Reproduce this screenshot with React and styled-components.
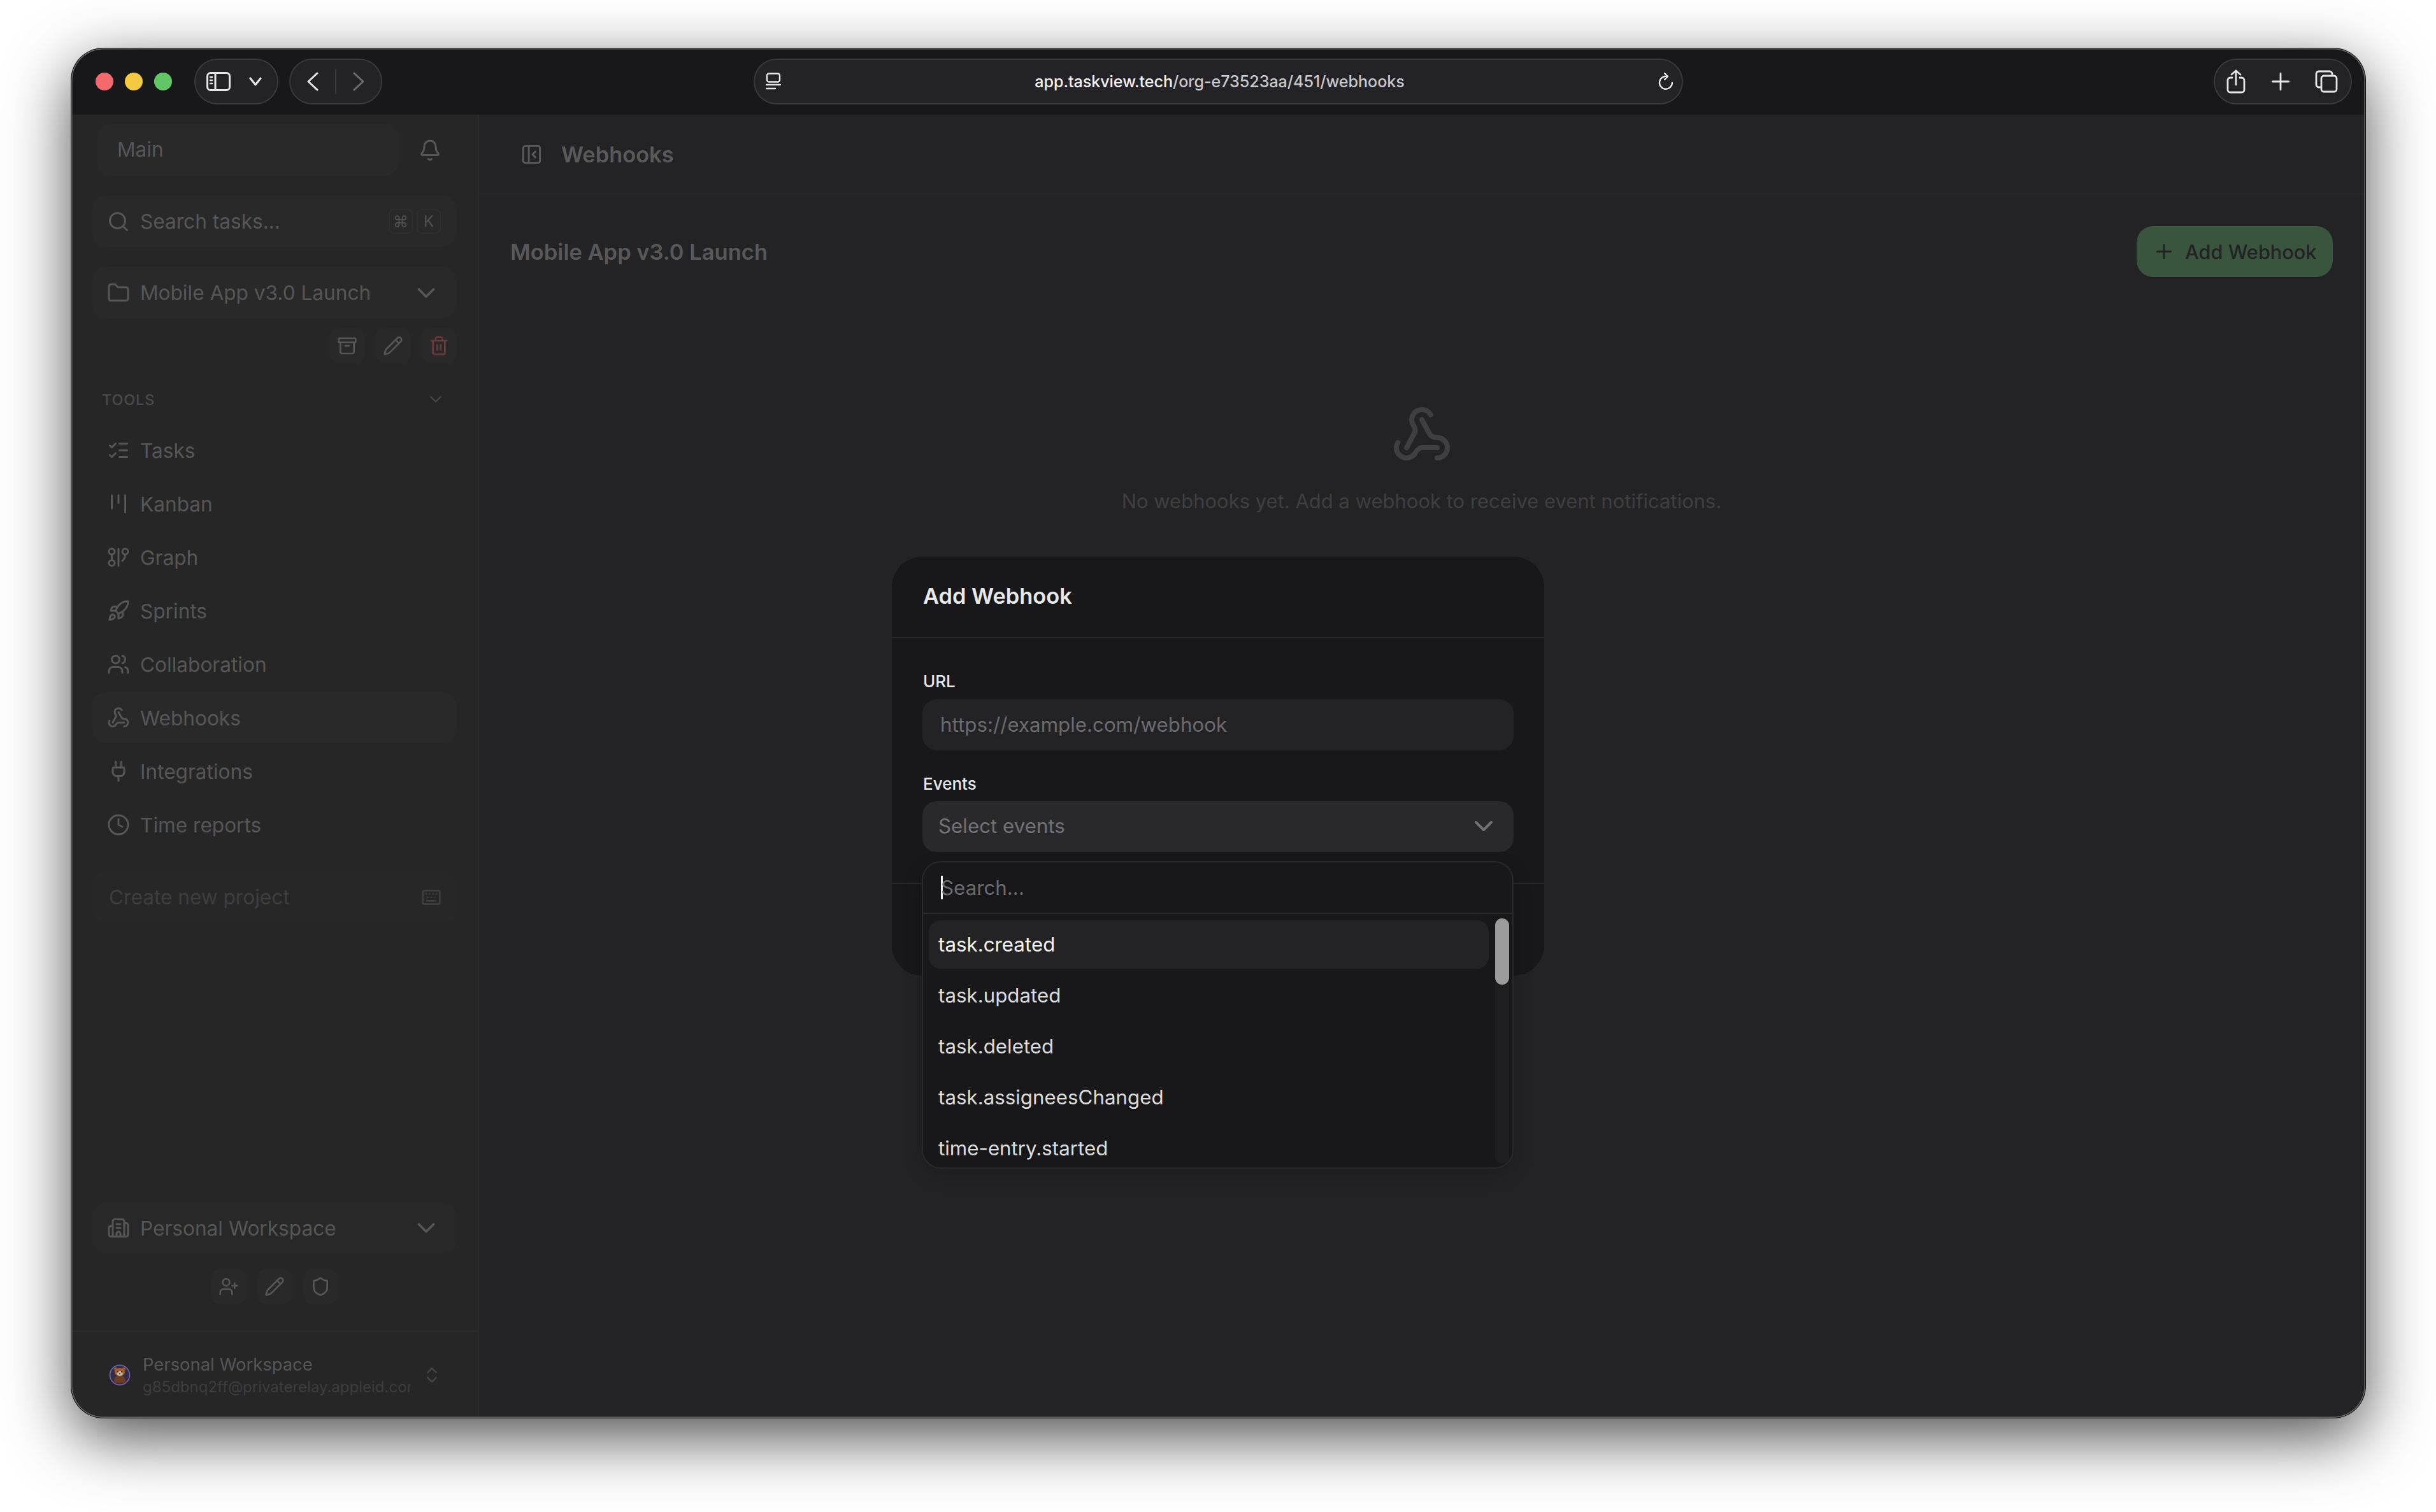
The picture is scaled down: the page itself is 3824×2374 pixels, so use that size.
import React from "react";
import styled, { createGlobalStyle } from "styled-components";
import {
  Archive, Bell, Building2, ChevronDown, ChevronsUpDown, Clock, Folder, GitGraph, Kanban,
  Keyboard, ListChecks, PanelLeftClose, Pencil, Plug, Plus, Rocket, Search, Shield, Trash2,
  UserPlus, Users, Webhook,
} from "lucide-react";

const UI = '"Inter", "Open Sans", "Liberation Sans", sans-serif';

const Global = createGlobalStyle`
  html, body { margin: 0; padding: 0; background: #fff; }
  body { font-family: ${UI}; width: 3824px; height: 2374px; overflow: hidden; }
  * { box-sizing: border-box; }
`;

const Page = styled.div`
  width: 3824px;
  height: 2374px;
  padding: 76px 111px 148px 112px;
`;

const Window = styled.div`
  position: relative;
  width: 100%;
  height: 100%;
  display: flex;
  flex-direction: column;
  border-radius: 50px;
  background: #232325;
  box-shadow: 0 0 0 1px #0c0c0c, 0 30px 100px rgba(0, 0, 0, 0.7);
  overflow: hidden;
  &::after {
    content: "";
    position: absolute;
    inset: 0;
    border-radius: 50px;
    box-shadow: inset 0 0 0 1.5px #6c6c6e;
    pointer-events: none;
  }
`;

const Frame = styled.div`
  position: relative;
  width: 100%;
  height: 100%;
  border-radius: 50px;
`;

const TitleBar = styled.header`
  flex: 0 0 104px;
  display: grid;
  grid-template-columns: 1fr 1459px 1fr;
  align-items: center;
  background: #18181a;
`;

const TitleLeft = styled.div`
  display: flex;
  align-items: center;
  padding-left: 38px;
`;

const Lights = styled.div`
  display: flex;
  gap: 18px;
  margin-right: 35px;
`;

const Light = styled.span`
  width: 28px;
  height: 28px;
  border-radius: 50%;
  background: ${(p) => p.$c};
`;

const Pill = styled.div`
  height: 72px;
  display: flex;
  align-items: center;
  background: #232327;
  border: 2px solid #38383d;
  border-radius: 36px;
  color: #e6e6e6;
`;

const SidebarToggle = styled(Pill)`
  width: 132px;
  padding-left: 17px;
  gap: 29px;
  margin-right: 17px;
`;

const NavPill = styled(Pill)`
  width: 146px;
  justify-content: space-between;
  padding: 0 26px 0 26px;
`;

const PillDivider = styled.span`
  width: 2px;
  height: 40px;
  background: #38383d;
`;

const AddressBar = styled(Pill)`
  width: 1459px;
  padding: 0 13px 0 17px;
  justify-content: space-between;
`;

const Url = styled.span`
  font-family: "Inter", "Liberation Sans", sans-serif;
  font-size: 25.2px;
  font-weight: 500;
  color: #c9c9cb;
  letter-spacing: -0.1px;
  b { color: #f2f2f2; font-weight: 500; }
`;

const ToolPill = styled(Pill)`
  justify-self: end;
  width: 217px;
  margin-right: 21px;
  padding: 0 20px 0 18px;
  justify-content: space-between;
`;

const Body = styled.div`
  flex: 1;
  min-height: 0;
  display: flex;
  position: relative;
`;

const Sidebar = styled.aside`
  flex: 0 0 640px;
  width: 640px;
  min-width: 0;
  overflow: hidden;
  display: flex;
  flex-direction: column;
  background: #262627;
  border-right: 2px solid #2a2a2c;
  padding-top: 15px;
  color: #565657;
  font-size: 31.6px;
`;

const TopRow = styled.div`
  display: flex;
  align-items: center;
  height: 81px;
  padding: 0 57px 0 40px;
  justify-content: space-between;
`;

const MainBox = styled.div`
  width: 474px;
  height: 81px;
  display: flex;
  align-items: center;
  padding-left: 32px;
  padding-bottom: 2px;
  border-radius: 22px;
  background: #29292a;
`;

const Wide = styled.div`
  height: ${(p) => p.$h || 81}px;
  margin: ${(p) => p.$mt || 0}px 33px 0 32px;
  display: flex;
  align-items: center;
  gap: 16px;
  padding: 0 25px 0 24px;
  border-radius: 22px;
  background: ${(p) => (p.$flat ? "#282829" : "#29292a")};
`;

const WideLabel = styled.span`
  flex: 1;
  white-space: nowrap;
`;

const Kbd = styled.kbd`
  width: 38px;
  height: 39px;
  display: flex;
  align-items: center;
  justify-content: center;
  font-family: ${UI};
  font-size: 24px;
  color: #505051;
  border: 2px solid #2f2f30;
  border-radius: 8px;
`;

const Kbds = styled.div`
  display: flex;
  gap: 6px;
`;

const Actions = styled.div`
  margin: ${(p) => p.$mt}px 33px 0 32px;
  display: flex;
  gap: 16px;
  justify-content: ${(p) => (p.$center ? "center" : "flex-end")};
`;

const ActionBtn = styled.button`
  width: 56px;
  height: 56px;
  padding: 0;
  display: flex;
  align-items: center;
  justify-content: center;
  border: 0;
  border-radius: 16px;
  background: #29292a;
  color: ${(p) => p.$c || "#565657"};
`;

const SectionHead = styled.div`
  height: 30px;
  margin: 41px 33px 0 32px;
  padding: 0 18px 0 16px;
  display: flex;
  align-items: center;
  justify-content: space-between;
  font-size: 23.5px;
  font-weight: 500;
  letter-spacing: 0.8px;
  color: #4a4a4b;
`;

const Nav = styled.nav`
  margin: 25px 33px 0 32px;
  display: flex;
  flex-direction: column;
  gap: 4px;
`;

const NavItem = styled.a`
  height: 80px;
  display: flex;
  align-items: center;
  gap: 16px;
  padding-left: 24px;
  border-radius: 22px;
  background: ${(p) => (p.$active ? "#29292a" : "transparent")};
`;

const CreateRow = styled(Wide)`
  margin-top: 33px;
  color: #3e3e3f;
  background: #272728;
  padding: 0 24px 0 27px;
`;

const Spacer = styled.div`
  flex: 1;
`;

const UserRow = styled.div`
  height: 137px;
  margin-top: 41px;
  border-top: 2px solid #2a2a2b;
  display: flex;
  align-items: center;
  padding: 0 56px 0 57px;
  gap: 17px;
`;

const UserText = styled.div`
  flex: 1;
  min-width: 0;
  display: flex;
  flex-direction: column;
  gap: 4px;
  overflow: hidden;
`;

const UserName = styled.span`
  font-size: 27.4px;
  line-height: 34px;
  white-space: nowrap;
`;

const UserMail = styled.span`
  font-size: 24px;
  line-height: 30px;
  color: #3d3d3e;
  white-space: nowrap;
  overflow: hidden;
`;

const Main = styled.main`
  flex: 1;
  min-width: 0;
  display: flex;
  flex-direction: column;
  background: #232325;
`;

const MainHeader = styled.div`
  flex: 0 0 126px;
  display: flex;
  align-items: center;
  gap: 29px;
  padding-left: 65px;
  border-bottom: 2px solid #29292b;
  font-size: 34.4px;
  font-weight: 600;
  color: #5a5a5b;
`;

const Content = styled.div`
  flex: 1;
  padding: 49px 51px 0 49px;
  display: flex;
  flex-direction: column;
`;

const TitleRow = styled.div`
  display: flex;
  align-items: center;
  justify-content: space-between;
`;

const ProjectTitle = styled.h1`
  margin: 0;
  font-size: 34.5px;
  font-weight: 600;
  color: #58585a;
`;

const AddButton = styled.button`
  width: 308px;
  height: 80px;
  display: flex;
  align-items: center;
  gap: 15px;
  padding: 0 0 0 25px;
  border: 0;
  border-radius: 26px;
  background: #39553e;
  color: #222224;
  font-family: ${UI};
  font-size: 30.7px;
  font-weight: 500;
`;

const Empty = styled.div`
  margin-top: 200px;
  display: flex;
  flex-direction: column;
  align-items: center;
  gap: 36px;
  color: #3f3f41;
  font-size: 31px;
  line-height: 40px;
`;

const Overlay = styled.div`
  position: absolute;
  inset: 0;
  display: flex;
  justify-content: center;
  align-items: flex-start;
  padding: 694px 1px 0 0;
`;

const Modal = styled.section`
  width: 1024px;
  height: 658px;
  display: flex;
  flex-direction: column;
  background: #18181a;
  border-radius: 48px;
  color: #e8e8e9;
`;

const ModalHeader = styled.div`
  height: 128px;
  display: flex;
  align-items: center;
  padding: 0 49px 4px;
  border-bottom: 2px solid #29292b;
  font-size: 34.4px;
  font-weight: 600;
`;

const ModalBody = styled.div`
  padding: 53px 48px 48px;
  display: flex;
  flex-direction: column;
  border-bottom: 2px solid #29292b;
`;

const Label = styled.label`
  height: 30px;
  margin: ${(p) => p.$mt || 0}px 0 ${(p) => p.$mb || 13}px 1px;
  font-size: 26px;
  font-weight: 500;
  line-height: 30px;
`;

const UrlInput = styled.input`
  height: 80px;
  width: 100%;
  padding: 0 28px;
  border: 0;
  border-radius: 22px;
  background: #232325;
  color: #e8e8e9;
  font-family: ${UI};
  font-size: 31.3px;
  &::placeholder { color: #6a6a70; opacity: 1; }
`;

const SelectBtnWrap = styled.div`
  position: relative;
`;

const SelectBtn = styled.div`
  height: 80px;
  display: flex;
  align-items: center;
  justify-content: space-between;
  padding: 0 23px 2px 25px;
  border-radius: 22px;
  background: #29292b;
  color: #727277;
  font-size: 31.3px;
`;

const Popover = styled.div`
  position: absolute;
  top: 94px;
  left: -1px;
  width: 929px;
  height: 483px;
  overflow: hidden;
  background: #18181a;
  border: 2px solid #29292b;
  border-radius: 30px;
  box-shadow: 0 10px 30px rgba(0, 0, 0, 0.18);
`;

const PopSearch = styled.div`
  height: 81px;
  display: flex;
  align-items: center;
  padding-left: 28px;
  border-bottom: 2px solid #29292b;
  color: #6a6a70;
  font-size: 31.3px;
`;

const Caret = styled.span`
  width: 3px;
  height: 37px;
  margin-right: -3px;
  background: #f2f2f2;
`;

const OptionList = styled.ul`
  list-style: none;
  margin: 0;
  padding: 10px 37px 0 9px;
  display: flex;
  flex-direction: column;
  gap: 4px;
`;

const Option = styled.li`
  flex: 0 0 76px;
  display: flex;
  align-items: center;
  padding: 0 0 1px 15px;
  border-radius: 18px;
  font-size: 31.3px;
  color: ${(p) => (p.$on ? "#f4f4f4" : "#dcdcdd")};
  background: ${(p) => (p.$on ? "#232325" : "transparent")};
`;

const ScrollTrack = styled.div`
  position: absolute;
  top: 88px;
  right: 5px;
  bottom: 6px;
  width: 22px;
  border-radius: 11px;
  background: #1e1e20;
`;

const ScrollThumb = styled.div`
  height: 104px;
  border-radius: 11px;
  background: #9c9c9d;
`;

/* ---------- Safari chrome drawings ---------- */
const Stroke = styled.svg`
  display: block;
  flex: none;
  fill: none;
  stroke: ${(p) => p.$c || "currentColor"};
  stroke-linecap: round;
  stroke-linejoin: round;
`;

const SidebarGlyph = () => (
  <Stroke width="38" height="30" viewBox="0 0 38 30" strokeWidth="3">
    <rect x="1.5" y="1.5" width="35" height="27" rx="5" />
    <path d="M14 2v26" />
    <path d="M6 8h3M6 13h3M6 18h3" strokeWidth="2.5" />
  </Stroke>
);
const SmallChevron = () => (
  <Stroke width="20" height="14" viewBox="0 0 20 14" strokeWidth="3.2">
    <path d="M2 2l8 10 8-10" />
  </Stroke>
);
const Back = () => (
  <Stroke width="18" height="30" viewBox="0 0 18 30" strokeWidth="3">
    <path d="M16 2L2 15l14 13" />
  </Stroke>
);
const Fwd = () => (
  <Stroke width="18" height="30" viewBox="0 0 18 30" strokeWidth="3" $c="#6c6c70">
    <path d="M2 2l14 13L2 28" />
  </Stroke>
);
const SiteGlyph = () => (
  <Stroke width="24" height="28" viewBox="0 0 24 28" strokeWidth="2.4">
    <rect x="2" y="1.5" width="20" height="13" rx="3" />
    <path d="M1 19h22" />
    <path d="M1 25h14" />
  </Stroke>
);
const Reload = () => (
  <Stroke width="24" height="28" viewBox="0 0 24 28" strokeWidth="2.4">
    <path d="M14 6a10 10 0 1 0 8 10" />
    <path d="M10 1l5 5-5 5" />
  </Stroke>
);
const Share = () => (
  <Stroke width="30" height="38" viewBox="0 0 30 38" strokeWidth="2.8">
    <path d="M9 13H6a4 4 0 0 0-4 4v15a4 4 0 0 0 4 4h18a4 4 0 0 0 4-4V17a4 4 0 0 0-4-4h-3" />
    <path d="M15 24V2M8 8l7-6 7 6" />
  </Stroke>
);
const NewTab = () => (
  <Stroke width="28" height="28" viewBox="0 0 28 28" strokeWidth="2.8">
    <path d="M14 1v26M1 14h26" />
  </Stroke>
);
const Tabs = () => (
  <Stroke width="36" height="36" viewBox="0 0 36 36" strokeWidth="2.8">
    <path d="M8 27H6a4 4 0 0 1-4-4V6a4 4 0 0 1 4-4h17a4 4 0 0 1 4 4v2" />
    <rect x="10" y="9" width="24" height="25" rx="4" />
  </Stroke>
);

const Avatar = () => (
  <svg width="38" height="38" viewBox="0 0 38 38" style={{ flex: "none" }}>
    <defs>
      <linearGradient id="ring" x1="0" y1="0" x2="1" y2="1">
        <stop offset="0" stopColor="#4f6a99" />
        <stop offset="1" stopColor="#8a5494" />
      </linearGradient>
    </defs>
    <circle cx="19" cy="19" r="18.5" fill="#26222f" />
    <circle cx="19" cy="19" r="15.5" fill="#332e48" stroke="url(#ring)" strokeWidth="1.8" />
    <path d="M10 29c0-6 4-9 9-9s9 3 9 9c-3 3-15 3-18 0z" fill="#6e3c20" />
    <circle cx="12.5" cy="9.5" r="2.6" fill="#9a5529" />
    <circle cx="25.5" cy="9.5" r="2.6" fill="#9a5529" />
    <ellipse cx="19" cy="14.5" rx="8" ry="6.5" fill="#a55d2c" />
    <ellipse cx="19" cy="16.5" rx="4.6" ry="3.6" fill="#c8bfb4" />
    <circle cx="16" cy="14" r="1" fill="#221612" />
    <circle cx="22" cy="14" r="1" fill="#221612" />
    <circle cx="19" cy="17" r="0.9" fill="#221612" />
  </svg>
);

const navItems = [
  [ListChecks, "Tasks"], [Kanban, "Kanban"], [GitGraph, "Graph"], [Rocket, "Sprints"],
  [Users, "Collaboration"], [Webhook, "Webhooks", true], [Plug, "Integrations"], [Clock, "Time reports"],
];
const events = ["task.created", "task.updated", "task.deleted", "task.assigneesChanged", "time-entry.started"];

export default function App() {
  return (
    <>
      <Global />
      <Page>
        <Frame>
          <Window>
            <TitleBar>
              <TitleLeft>
                <Lights>
                  <Light $c="#f4696b" />
                  <Light $c="#f5c941" />
                  <Light $c="#62c566" />
                </Lights>
                <SidebarToggle>
                  <SidebarGlyph />
                  <SmallChevron />
                </SidebarToggle>
                <NavPill>
                  <Back />
                  <PillDivider />
                  <Fwd />
                </NavPill>
              </TitleLeft>
              <AddressBar>
                <SiteGlyph />
                <Url><b>app.taskview.tech</b>/org-e73523aa/451/webhooks</Url>
                <Reload />
              </AddressBar>
              <ToolPill>
                <Share />
                <NewTab />
                <Tabs />
              </ToolPill>
            </TitleBar>
            <Body>
              <Sidebar>
                <TopRow>
                  <MainBox>Main</MainBox>
                  <Bell size={36} />
                </TopRow>
                <Wide $mt={31}>
                  <Search size={36} />
                  <WideLabel>Search tasks...</WideLabel>
                  <Kbds>
                    <Kbd>⌘</Kbd>
                    <Kbd>K</Kbd>
                  </Kbds>
                </Wide>
                <Wide $mt={31}>
                  <Folder size={36} />
                  <WideLabel>Mobile App v3.0 Launch</WideLabel>
                  <ChevronDown size={46} />
                </Wide>
                <Actions $mt={15}>
                  <ActionBtn><Archive size={32} /></ActionBtn>
                  <ActionBtn><Pencil size={32} /></ActionBtn>
                  <ActionBtn $c="#6b3a3a"><Trash2 size={32} /></ActionBtn>
                </Actions>
                <SectionHead>
                  TOOLS
                  <ChevronDown size={30} strokeWidth={1.8} />
                </SectionHead>
                <Nav>
                  {navItems.map(([Icon, label, active]) => (
                    <NavItem key={label} $active={active}>
                      <Icon size={36} />
                      {label}
                    </NavItem>
                  ))}
                </Nav>
                <CreateRow>
                  <WideLabel>Create new project</WideLabel>
                  <Keyboard size={32} />
                </CreateRow>
                <Spacer />
                <Wide $h={80} $flat>
                  <Building2 size={36} />
                  <WideLabel>Personal Workspace</WideLabel>
                  <ChevronDown size={46} />
                </Wide>
                <Actions $mt={24} $center>
                  <ActionBtn><UserPlus size={32} /></ActionBtn>
                  <ActionBtn><Pencil size={32} /></ActionBtn>
                  <ActionBtn><Shield size={32} /></ActionBtn>
                </Actions>
                <UserRow>
                  <Avatar />
                  <UserText>
                    <UserName>Personal Workspace</UserName>
                    <UserMail>g85dbnq2ff@privaterelay.appleid.com</UserMail>
                  </UserText>
                  <ChevronsUpDown size={32} color="#444445" />
                </UserRow>
              </Sidebar>
              <Main>
                <MainHeader>
                  <PanelLeftClose size={35} />
                  Webhooks
                </MainHeader>
                <Content>
                  <TitleRow>
                    <ProjectTitle>Mobile App v3.0 Launch</ProjectTitle>
                    <AddButton>
                      <Plus size={36} />
                      Add Webhook
                    </AddButton>
                  </TitleRow>
                  <Empty>
                    <Webhook size={96} />
                    No webhooks yet. Add a webhook to receive event notifications.
                  </Empty>
                </Content>
              </Main>
              <Overlay>
                <Modal>
                  <ModalHeader>Add Webhook</ModalHeader>
                  <ModalBody>
                    <Label>URL</Label>
                    <UrlInput placeholder="https://example.com/webhook" readOnly />
                    <Label $mt={38} $mb={12}>Events</Label>
                    <SelectBtnWrap>
                      <SelectBtn>
                        Select events
                        <ChevronDown size={48} />
                      </SelectBtn>
                      <Popover>
                        <PopSearch>
                          <Caret />
                          Search...
                        </PopSearch>
                        <OptionList>
                          {events.map((e, i) => (
                            <Option key={e} $on={i === 0}>{e}</Option>
                          ))}
                        </OptionList>
                        <ScrollTrack>
                          <ScrollThumb />
                        </ScrollTrack>
                      </Popover>
                    </SelectBtnWrap>
                  </ModalBody>
                </Modal>
              </Overlay>
            </Body>
          </Window>
        </Frame>
      </Page>
    </>
  );
}
